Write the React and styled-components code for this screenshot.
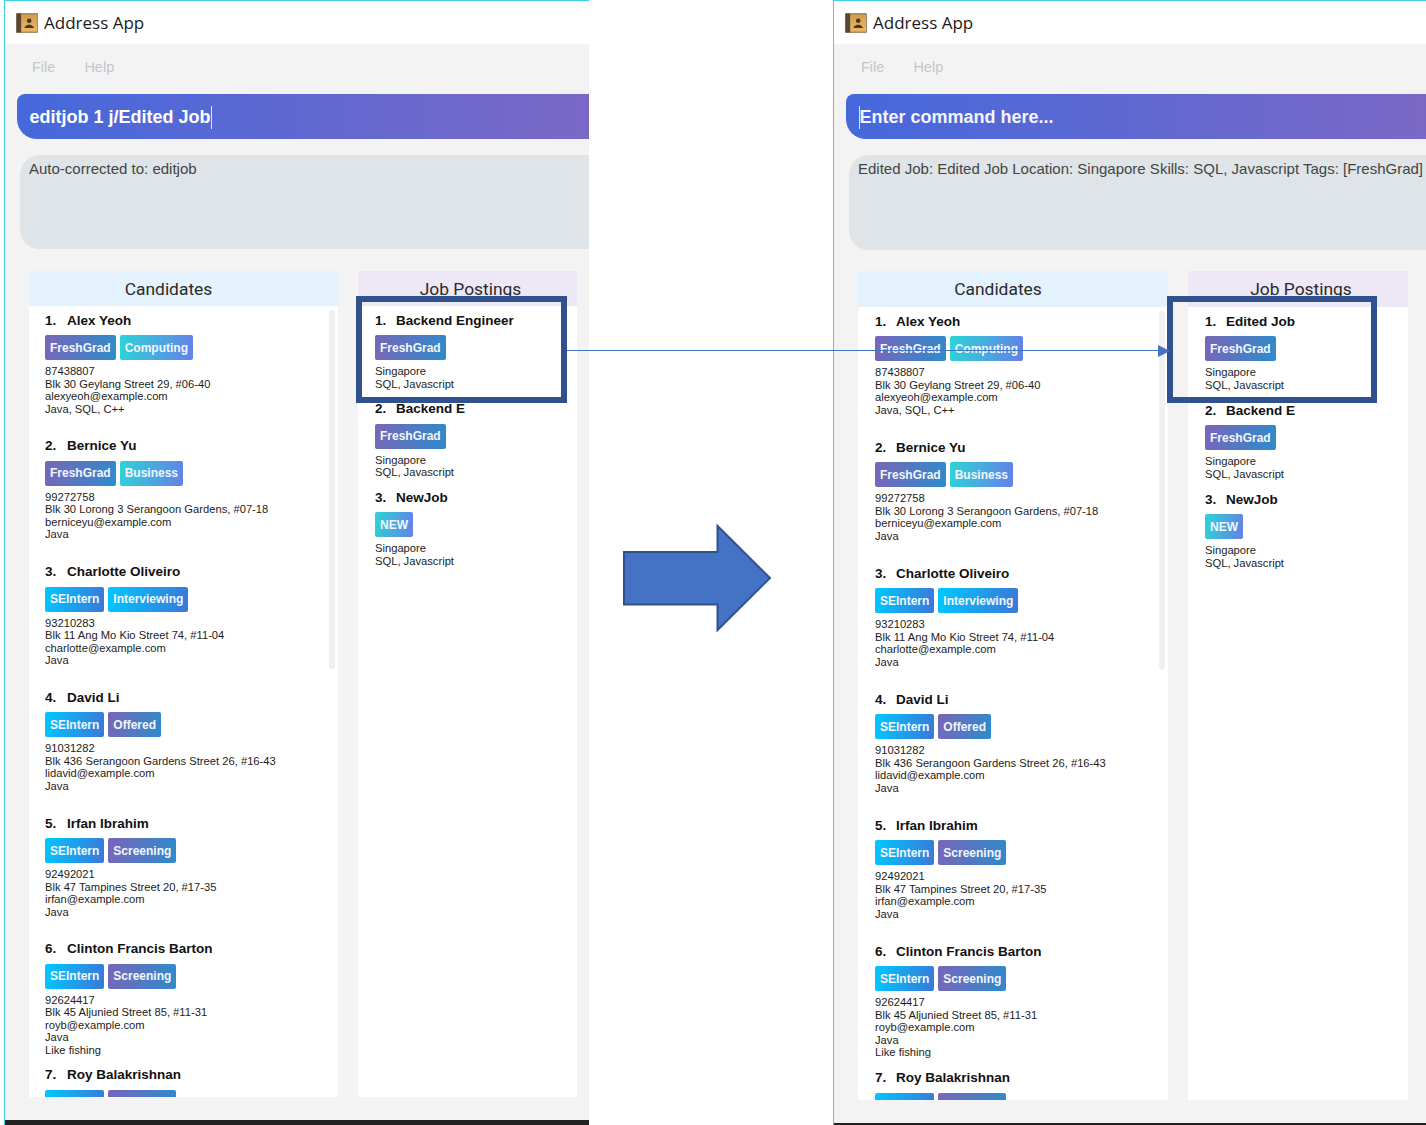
import React from 'react';
import styled, {createGlobalStyle} from 'styled-components';

const GlobalStyle = createGlobalStyle`
  html, body {
    margin: 0;
    padding: 0;
    background: #fff;
    font-family: "Liberation Sans", Arial, sans-serif;
  }
`;

const gradients = {
  purple: 'linear-gradient(100deg, #7866b8, #2e8bcc)',
  teal: 'linear-gradient(100deg, #2dd4d6, #6480e8)',
  sky: 'linear-gradient(100deg, #00c8ff, #3a78d8)',
};

const tagTones = {
  FreshGrad: 'purple',
  Offered: 'purple',
  Screening: 'purple',
  Computing: 'teal',
  Business: 'teal',
  NEW: 'teal',
  SEIntern: 'sky',
  Interviewing: 'sky',
};

const candidates = [
  {name: 'Alex Yeoh', tags: ['FreshGrad', 'Computing'], lines: ['87438807', 'Blk 30 Geylang Street 29, #06-40', 'alexyeoh@example.com', 'Java, SQL, C++']},
  {name: 'Bernice Yu', tags: ['FreshGrad', 'Business'], lines: ['99272758', 'Blk 30 Lorong 3 Serangoon Gardens, #07-18', 'berniceyu@example.com', 'Java']},
  {name: 'Charlotte Oliveiro', tags: ['SEIntern', 'Interviewing'], lines: ['93210283', 'Blk 11 Ang Mo Kio Street 74, #11-04', 'charlotte@example.com', 'Java']},
  {name: 'David Li', tags: ['SEIntern', 'Offered'], lines: ['91031282', 'Blk 436 Serangoon Gardens Street 26, #16-43', 'lidavid@example.com', 'Java']},
  {name: 'Irfan Ibrahim', tags: ['SEIntern', 'Screening'], lines: ['92492021', 'Blk 47 Tampines Street 20, #17-35', 'irfan@example.com', 'Java']},
  {name: 'Clinton Francis Barton', tags: ['SEIntern', 'Screening'], lines: ['92624417', 'Blk 45 Aljunied Street 85, #11-31', 'royb@example.com', 'Java', 'Like fishing']},
  {name: 'Roy Balakrishnan', tags: ['SEIntern', 'Screening'], lines: []},
];

const jobLines = ['Singapore', 'SQL, Javascript'];

const Stage = styled.div`
  position: relative;
  display: flex;
  gap: 244px;
  width: 1426px;
  height: 1125px;
  padding-left: 4px;
  box-sizing: border-box;
  overflow: hidden;
`;

const Win = styled.div`
  flex: none;
  width: ${(p) => p.$width}px;
  height: 1125px;
  display: flex;
  flex-direction: column;
  overflow: hidden;
  box-sizing: border-box;
  border-left: 1px solid #3fd0e2;
  border-top: 1px solid #3fd0e2;
  background: #f3f3f3;
`;

const TitleBar = styled.div`
  flex: none;
  height: 43px;
  background: #fff;
  display: flex;
  align-items: center;
  padding-left: 11px;
  gap: 6px;
  font-family: "Open Sans", sans-serif;
  font-size: 17px;
  color: #1a1a1a;
`;

const MenuBar = styled.div`
  flex: none;
  height: 50px;
  padding: 0 0 4px 27px;
  box-sizing: border-box;
  display: flex;
  align-items: center;
  gap: 29px;
  font-size: 14.5px;
  color: #c3c7cb;
`;

const CommandBar = styled.div`
  flex: none;
  width: ${(p) => p.$width}px;
  height: ${(p) => p.$height}px;
  margin-left: 12px;
  padding: 2px 0 0 12.5px;
  box-sizing: border-box;
  display: flex;
  align-items: center;
  border-radius: 8px 0 0 20px;
  background: linear-gradient(90deg, #4568dc, #7b68c6);
  color: #fff;
  font-size: 18px;
  font-weight: 700;
  white-space: nowrap;
`;

const Caret = styled.span`
  flex: none;
  width: 1px;
  height: 23px;
  background: #dfe3f7;
`;

const Placeholder = styled.span`
  color: #f4f5fd;
`;

const ResultBox = styled.div`
  flex: none;
  height: ${(p) => p.$height}px;
  margin: 16px 0 0 15px;
  padding: 5px 0 0 9px;
  box-sizing: border-box;
  border-radius: 20px 0 0 20px;
  background: #dee4e7;
  color: #444;
  font-size: 15px;
  line-height: 18px;
  white-space: nowrap;
`;

const Columns = styled.div`
  flex: 1;
  min-height: 0;
  display: flex;
  gap: 20px;
  margin: ${(p) => p.$top}px 0 0 24px;
`;

const Column = styled.div`
  flex: none;
  width: ${(p) => p.$width}px;
  display: flex;
  flex-direction: column;
`;

const ColumnHeader = styled.div`
  flex: none;
  height: ${(p) => p.$height}px;
  padding: 0 ${(p) => p.$shiftRight}px 0 ${(p) => p.$shiftLeft}px;
  box-sizing: border-box;
  display: flex;
  align-items: center;
  justify-content: center;
  background: ${(p) => p.$bg};
  font-family: Roboto, sans-serif;
  font-size: 17.4px;
  color: #2a2a2a;
`;

const List = styled.div`
  position: relative;
  flex: 1;
  min-height: 0;
  overflow: hidden;
  background: #fff;
`;

const Scrollbar = styled.div`
  position: absolute;
  top: 4px;
  right: 3px;
  width: 6px;
  height: 359px;
  border-radius: 3px;
  background: #f0f0f0;
`;

const Card = styled.div`
  height: ${(p) => p.$height}px;
  padding: 6px 0 0 ${(p) => p.$pad}px;
  box-sizing: border-box;
`;

const CardName = styled.div`
  display: flex;
  height: 16px;
  align-items: center;
  font-size: 13.5px;
  font-weight: 700;
  color: #111;
  white-space: nowrap;
`;

// the name always starts 38px into the card, whatever the card's padding
const CardIndex = styled.span`
  flex: none;
  width: ${(p) => 38 - p.$pad}px;
`;

const TagRow = styled.div`
  display: flex;
  gap: 4px;
  margin-top: 7px;
`;

const Tag = styled.span`
  height: 25px;
  padding: 0 5px;
  box-sizing: border-box;
  display: flex;
  align-items: center;
  border-radius: 2px;
  background: ${(p) => gradients[p.$tone]};
  color: #f2f6fc;
  font-size: 12px;
  font-weight: 700;
`;

const Details = styled.div`
  margin-top: 5px;
  font-size: 11.2px;
  line-height: 12.5px;
  color: #1c1c1c;
  white-space: nowrap;
`;

const FooterBar = styled.div`
  flex: none;
  height: ${(p) => p.$gap}px;
`;

const BottomEdge = styled.div`
  flex: none;
  height: ${(p) => p.$height}px;
  background: #222;
`;

const Highlight = styled.div`
  position: absolute;
  top: 296px;
  left: ${(p) => p.$left}px;
  width: ${(p) => p.$width}px;
  height: 107px;
  box-sizing: border-box;
  border: 6px solid #2f528f;
`;

const Overlay = styled.svg`
  position: absolute;
  top: 0;
  left: 0;
  pointer-events: none;
`;

function BookIcon() {
  return (
    <svg width="22" height="20" viewBox="0 0 22 20">
      <defs>
        <linearGradient id="cover" x1="0" y1="0" x2="0" y2="1">
          <stop offset="0" stopColor="#d39c4c" />
          <stop offset="1" stopColor="#eab765" />
        </linearGradient>
      </defs>
      <rect x="0" y="0" width="22" height="20" rx="1" fill="#a08a6c" />
      <rect x="0.5" y="0.5" width="4.5" height="19" fill="#5d4630" />
      <rect x="5.5" y="1.5" width="15.5" height="17" fill="url(#cover)" />
      <circle cx="13.2" cy="7.8" r="2.3" fill="#4a3520" />
      <path d="M8.5 15c0-2.2 2.6-2.2 3.3-3.2h2.8c.7 1 3.3 1 3.3 3.2z" fill="#4a3520" />
    </svg>
  );
}

function ListCard({index, person, height, pad}) {
  return (
    <Card $height={height} $pad={pad}>
      <CardName><CardIndex $pad={pad}>{index}.</CardIndex>{person.name}</CardName>
      <TagRow>
        {person.tags.map((tag) =>
          <Tag key={tag} $tone={tagTones[tag]}>{tag}</Tag>
        )}
      </TagRow>
      <Details>
        {person.lines.map((line) => <div key={line}>{line}</div>)}
      </Details>
    </Card>
  );
}

function AppWindow({size, command, result, jobs}) {
  return (
    <Win $width={size.width}>
      <TitleBar><BookIcon />Address App</TitleBar>
      <MenuBar><span>File</span><span>Help</span></MenuBar>
      <CommandBar $width={size.commandW} $height={size.commandH}>{command}</CommandBar>
      <ResultBox $height={size.resultH}>{result}</ResultBox>
      <Columns $top={size.columnsTop}>
        <Column $width={size.candidatesW}>
          <ColumnHeader $height={size.headerH} $bg="#e3f2fd" $shiftRight={30} $shiftLeft={0}>Candidates</ColumnHeader>
          <List>
            {candidates.map((person, i) =>
              <ListCard key={person.name} index={i + 1} person={person} height={size.cardH} pad={size.candidatePad} />
            )}
            <Scrollbar />
          </List>
        </Column>
        <Column $width={size.jobsW}>
          <ColumnHeader $height={size.headerH} $bg="#ede7f6" $shiftRight={0} $shiftLeft={6}>Job Postings</ColumnHeader>
          <List>
            {jobs.map((job, i) =>
              <ListCard key={job.name} index={i + 1} person={job} height={size.jobH} pad={17} />
            )}
          </List>
        </Column>
        <Column $width={200}>
          <ColumnHeader $height={size.headerH} $bg="#fce4ec" $shiftRight={0} $shiftLeft={0} />
        </Column>
      </Columns>
      <FooterBar $gap={size.footerH} />
      <BottomEdge $height={size.edgeH} />
    </Win>
  );
}

const leftSize = {
  width: 585, commandW: 572, commandH: 45, resultH: 94, columnsTop: 22, headerH: 35,
  candidatesW: 309, jobsW: 219, cardH: 125.8, jobH: 88.5, candidatePad: 16, footerH: 23, edgeH: 5,
};

const rightSize = {
  width: 593, commandW: 580, commandH: 45, resultH: 95, columnsTop: 21, headerH: 36,
  candidatesW: 310, jobsW: 220, cardH: 126.1, jobH: 89, candidatePad: 17, footerH: 23, edgeH: 2,
};

const makeJobs = (first) => [
  {name: first, tags: ['FreshGrad'], lines: jobLines},
  {name: 'Backend E', tags: ['FreshGrad'], lines: jobLines},
  {name: 'NewJob', tags: ['NEW'], lines: jobLines},
];

export default function App() {
  return (
    <>
      <GlobalStyle />
      <Stage>
        <AppWindow
          size={leftSize}
          command={<>editjob 1 j/Edited Job<Caret /></>}
          result="Auto-corrected to: editjob"
          jobs={makeJobs('Backend Engineer')}
        />
        <AppWindow
          size={rightSize}
          command={<><Caret /><Placeholder>Enter command here...</Placeholder></>}
          result="Edited Job: Edited Job Location: Singapore Skills: SQL, Javascript Tags: [FreshGrad]"
          jobs={makeJobs('Edited Job')}
        />
        <Highlight $left={356} $width={211} />
        <Highlight $left={1167} $width={210} />
        <Overlay width="1426" height="1125" viewBox="0 0 1426 1125">
          <line x1="567" y1="350.5" x2="1160" y2="350.5" stroke="#4472c4" strokeWidth="1" />
          <polygon points="1158,345 1170,351 1158,357" fill="#4472c4" />
          <polygon
            points="624,552 717.5,552 717.5,526 770,578 717.5,630 717.5,604.5 624,604.5"
            fill="#4472c4"
            stroke="#2f528f"
            strokeWidth="2"
          />
        </Overlay>
      </Stage>
    </>
  );
}
